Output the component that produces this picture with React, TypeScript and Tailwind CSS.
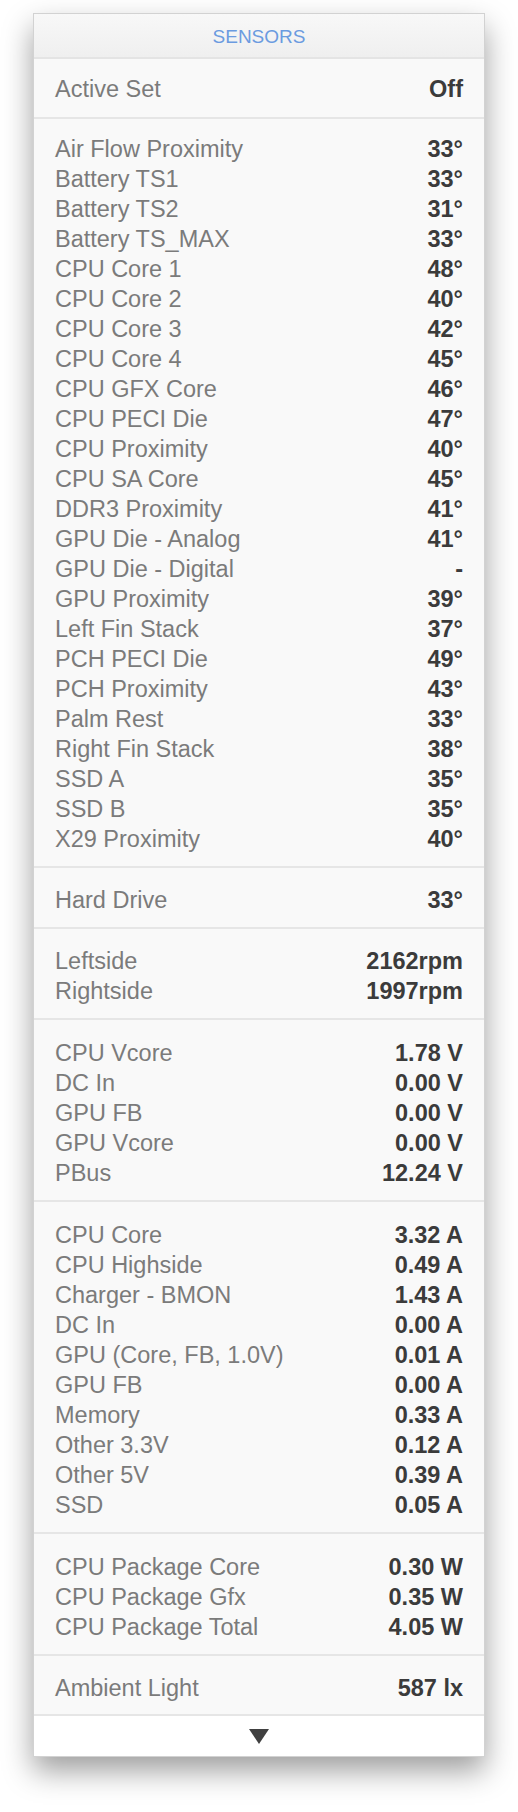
import React from 'react';

type Row = { label: string; value: string };
type Section = { pad: string; rows: Row[] };

// pad classes are written out in full so Tailwind picks them up
const sections: Section[] = [
  { pad: 'pt-[15px] pb-[13px]', rows: [{ label: 'Active Set', value: 'Off' }] },
  {
    pad: 'pt-[15px] pb-[12px]',
    rows: [
      { label: 'Air Flow Proximity', value: '33°' },
      { label: 'Battery TS1', value: '33°' },
      { label: 'Battery TS2', value: '31°' },
      { label: 'Battery TS_MAX', value: '33°' },
      { label: 'CPU Core 1', value: '48°' },
      { label: 'CPU Core 2', value: '40°' },
      { label: 'CPU Core 3', value: '42°' },
      { label: 'CPU Core 4', value: '45°' },
      { label: 'CPU GFX Core', value: '46°' },
      { label: 'CPU PECI Die', value: '47°' },
      { label: 'CPU Proximity', value: '40°' },
      { label: 'CPU SA Core', value: '45°' },
      { label: 'DDR3 Proximity', value: '41°' },
      { label: 'GPU Die - Analog', value: '41°' },
      { label: 'GPU Die - Digital', value: '-' },
      { label: 'GPU Proximity', value: '39°' },
      { label: 'Left Fin Stack', value: '37°' },
      { label: 'PCH PECI Die', value: '49°' },
      { label: 'PCH Proximity', value: '43°' },
      { label: 'Palm Rest', value: '33°' },
      { label: 'Right Fin Stack', value: '38°' },
      { label: 'SSD A', value: '35°' },
      { label: 'SSD B', value: '35°' },
      { label: 'X29 Proximity', value: '40°' },
    ],
  },
  { pad: 'pt-[17px] pb-[12px]', rows: [{ label: 'Hard Drive', value: '33°' }] },
  {
    pad: 'pt-[17px] pb-[12px]',
    rows: [
      { label: 'Leftside', value: '2162rpm' },
      { label: 'Rightside', value: '1997rpm' },
    ],
  },
  {
    pad: 'pt-[18px] pb-[12px]',
    rows: [
      { label: 'CPU Vcore', value: '1.78 V' },
      { label: 'DC In', value: '0.00 V' },
      { label: 'GPU FB', value: '0.00 V' },
      { label: 'GPU Vcore', value: '0.00 V' },
      { label: 'PBus', value: '12.24 V' },
    ],
  },
  {
    pad: 'pt-[18px] pb-[12px]',
    rows: [
      { label: 'CPU Core', value: '3.32 A' },
      { label: 'CPU Highside', value: '0.49 A' },
      { label: 'Charger - BMON', value: '1.43 A' },
      { label: 'DC In', value: '0.00 A' },
      { label: 'GPU (Core, FB, 1.0V)', value: '0.01 A' },
      { label: 'GPU FB', value: '0.00 A' },
      { label: 'Memory', value: '0.33 A' },
      { label: 'Other 3.3V', value: '0.12 A' },
      { label: 'Other 5V', value: '0.39 A' },
      { label: 'SSD', value: '0.05 A' },
    ],
  },
  {
    pad: 'pt-[18px] pb-[12px]',
    rows: [
      { label: 'CPU Package Core', value: '0.30 W' },
      { label: 'CPU Package Gfx', value: '0.35 W' },
      { label: 'CPU Package Total', value: '4.05 W' },
    ],
  },
  { pad: 'pt-[17px] pb-[11px]', rows: [{ label: 'Ambient Light', value: '587 lx' }] },
];

function SensorSection({ section }: { section: Section }) {
  return (
    <div className={`border-b-2 border-[#e6e6e6] px-[21px] ${section.pad}`}>
      {section.rows.map((row, i) => (
        <div key={i} className="flex h-[30px] items-center justify-between leading-[30px]">
          <span className="text-[#7b7b7b]">{row.label}</span>
          <span className="font-bold text-[#3b3b3b]">{row.value}</span>
        </div>
      ))}
    </div>
  );
}

export default function App() {
  return (
    <div
      className="min-h-[1812px] bg-white pt-[13px]"
      style={{ fontFamily: '"Liberation Sans", Arial, sans-serif' }}
    >
      <div className="mx-[33px] w-[452px] border border-[#d2d2d2] bg-[#f9f9f9] text-[23.5px] shadow-[0_14px_28px_rgba(0,0,0,0.38)]">
        {/* header */}
        <div className="flex h-[45px] items-center justify-center border-b-2 border-[#e4e4e4] bg-gradient-to-b from-[#f8f8f8] to-[#efefef] pt-[4px] text-[19px] text-[#6b9be0]">
          SENSORS
        </div>

        {sections.map((section, i) => (
          <SensorSection key={i} section={section} />
        ))}

        {/* footer */}
        <div className="flex h-[40px] items-center justify-center bg-white">
          <svg width="20" height="15" viewBox="0 0 20 15">
            <path d="M0 0 H20 L10 15 Z" fill="#404040" />
          </svg>
        </div>
      </div>
    </div>
  );
}
